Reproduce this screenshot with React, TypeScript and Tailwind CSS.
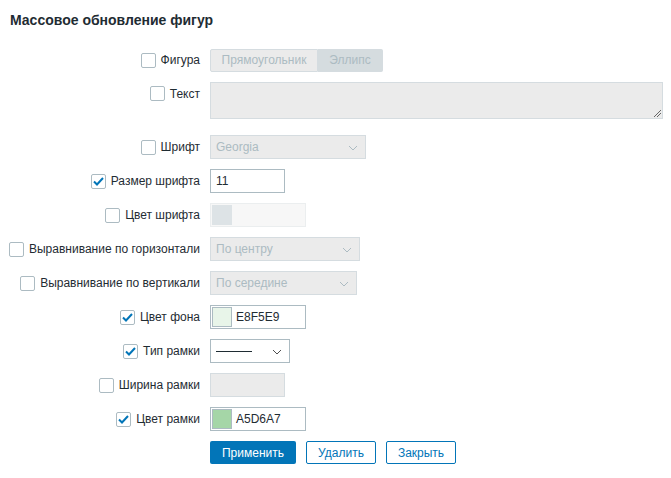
import React from 'react';

const font = { fontFamily: '"Liberation Sans", Arial, sans-serif' };

function Chevron({ disabled }: { disabled?: boolean }) {
    return (
        <svg width="10" height="6" viewBox="0 0 10 6" className="absolute right-[7px] top-[9px]">
            <path d="M1 1l4 4 4-4" fill="none" stroke={disabled ? '#acbbc2' : '#4f4f4f'} strokeWidth="1" />
        </svg>
    );
}

function Checkbox({ checked }: { checked?: boolean }) {
    return (
        <span className="flex h-[15px] w-[15px] shrink-0 items-center justify-center rounded-[2px] border border-[#acbbc2] bg-white">
            {checked && (
                <svg width="11" height="9" viewBox="0 0 11 9">
                    <path d="M1 4.5l3 3 6-6.5" fill="none" stroke="#0275b8" strokeWidth="2" />
                </svg>
            )}
        </span>
    );
}

interface RowProps {
    label: string;
    checked?: boolean;
    top?: boolean;
    children: React.ReactNode;
}

/** Form row: right-aligned checkbox + label, then the control. */
function Row({ label, checked, top, children }: RowProps) {
    return (
        <div className={top ? 'flex h-[43px] items-start' : 'flex h-[24px] items-center'}>
            <div className={`flex w-[190px] shrink-0 items-center justify-end gap-[5px] ${top ? 'pt-[4px]' : ''}`}>
                <Checkbox checked={checked} />
                <span className="whitespace-nowrap text-[12px] leading-[14px] text-[#1f2c33]">{label}</span>
            </div>
            <div className="ml-[10px] flex">{children}</div>
        </div>
    );
}

function DisabledSelect({ value, width }: { value: string; width: string }) {
    return (
        <div className={`relative h-[24px] ${width} border border-[#d5dce0] bg-[#ebebeb] pl-[5px] text-[12px] leading-[22px] text-[#acbbc2]`}>
            {value}
            <Chevron disabled />
        </div>
    );
}

function ColorInput({ color, value }: { color: string; value: string }) {
    return (
        <div className="flex h-[24px] w-[96px] items-center border border-[#acbbc2] bg-white pl-[1px]">
            <span className="h-[20px] w-[20px] border border-[#acbbc2]" style={{ backgroundColor: color }} />
            <span className="ml-[4px] text-[12px] text-[#1f2c33]">{value}</span>
        </div>
    );
}

export default function App() {
    return (
        <div className="min-h-[478px] bg-white px-[10px] pt-[12px]" style={font}>
            <h2 className="text-[14px] font-bold leading-[16px] text-[#1f2c33]">Массовое обновление фигур</h2>
            <div className="mt-[20px] flex flex-col gap-[10px]">
                <Row label="Фигура">
                    <div className="flex h-[23px] text-center text-[12px] leading-[21px] text-[#acbbc2]">
                        <span className="w-[108px] rounded-l-[2px] border border-[#d5dce0] bg-[#ebebeb]">Прямоугольник</span>
                        <span className="w-[65px] rounded-r-[2px] border border-l-0 border-[#d5dce0] bg-[#d5dcdf]">Эллипс</span>
                    </div>
                </Row>
                <Row label="Текст" top>
                    <div className="relative h-[37px] w-[453px] border border-[#d5dce0] bg-[#ebebeb]">
                        <svg width="8" height="8" viewBox="0 0 8 8" className="absolute bottom-[1px] right-[1px]">
                            <path d="M1 8L8 1M4 8L8 4" stroke="#666" strokeWidth="1" />
                        </svg>
                    </div>
                </Row>
                <Row label="Шрифт">
                    <DisabledSelect value="Georgia" width="w-[156px]" />
                </Row>
                <Row label="Размер шрифта" checked>
                    <div className="h-[24px] w-[75px] border border-[#acbbc2] bg-white pl-[5px] text-[12px] leading-[22px] text-[#1f2c33]">11</div>
                </Row>
                <Row label="Цвет шрифта">
                    <div className="flex h-[24px] w-[96px] items-center border border-[#ebeeef] bg-[#f7f7f7] pl-[1px]">
                        <span className="h-[20px] w-[20px] bg-[#dde3e6]" />
                    </div>
                </Row>
                <Row label="Выравнивание по горизонтали">
                    <DisabledSelect value="По центру" width="w-[150px]" />
                </Row>
                <Row label="Выравнивание по вертикали">
                    <DisabledSelect value="По середине" width="w-[147px]" />
                </Row>
                <Row label="Цвет фона" checked>
                    <ColorInput color="#e8f5e9" value="E8F5E9" />
                </Row>
                <Row label="Тип рамки" checked>
                    <div className="relative flex h-[24px] w-[80px] items-center border border-[#acbbc2] bg-white pl-[5px]">
                        <span className="h-px w-[36px] bg-[#1f2c33]" />
                        <Chevron />
                    </div>
                </Row>
                <Row label="Ширина рамки">
                    <div className="h-[24px] w-[75px] border border-[#d5dce0] bg-[#ebebeb]" />
                </Row>
                <Row label="Цвет рамки" checked>
                    <ColorInput color="#a5d6a7" value="A5D6A7" />
                </Row>
                <div className="flex h-[24px] gap-[10px] pl-[200px] text-[12px]">
                    <button className="h-[23px] w-[86px] rounded-[2px] bg-[#0275b8] text-white">Применить</button>
                    <button className="h-[23px] w-[70px] rounded-[2px] border border-[#0275b8] bg-white text-[#0275b8]">Удалить</button>
                    <button className="h-[23px] w-[70px] rounded-[2px] border border-[#0275b8] bg-white text-[#0275b8]">Закрыть</button>
                </div>
            </div>
        </div>
    );
}
